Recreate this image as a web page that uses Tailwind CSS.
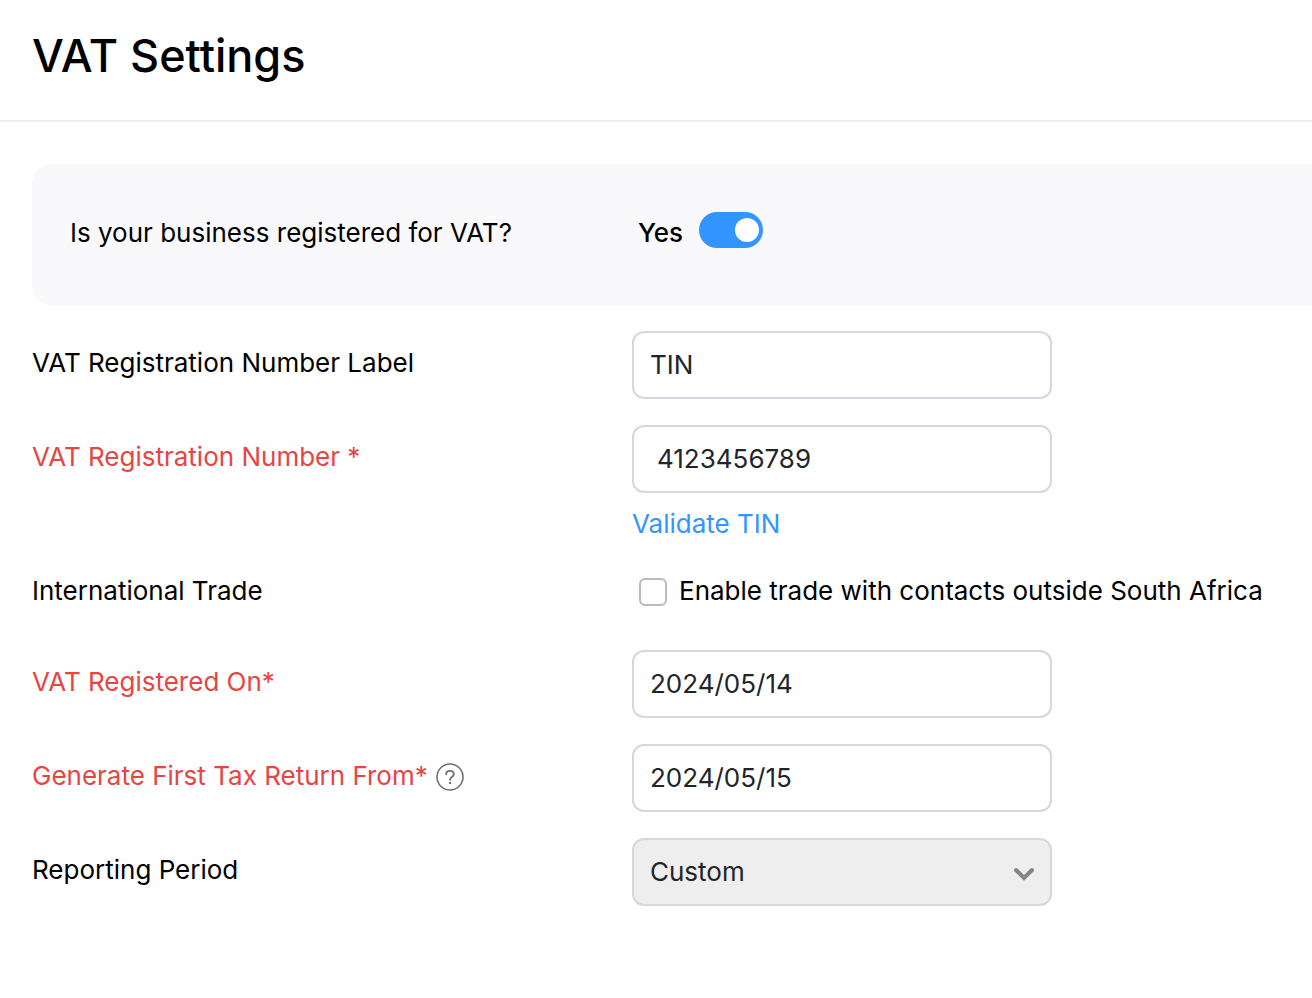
<!DOCTYPE html>
<html lang="en">
<head>
  <meta charset="UTF-8">
  <meta name="viewport" content="width=device-width, initial-scale=1.0">
  <title>VAT Settings</title>
  <script src="https://cdn.jsdelivr.net/npm/@tailwindcss/browser@4"></script>
</head>
<body class="bg-white min-h-screen overflow-x-hidden font-['Inter',sans-serif] text-[26px] leading-8 text-black">
  <header class="border-b-2 border-[#ededed] px-8 pt-7 pb-9">
    <h1 class="text-[45px] leading-14 font-medium">VAT Settings</h1>
  </header>

  <main class="pl-8 pt-[42px]">
    <!-- Registered toggle -->
    <section class="flex items-start rounded-l-[20px] bg-[#f9f9fb] pl-[38px] pt-12 pb-14">
      <label for="registered" class="w-[568px] shrink-0 pt-[5px]">Is your business registered for VAT?</label>
      <span class="pt-[5px] font-medium">Yes</span>
      <input id="registered" type="checkbox" role="switch" checked
        class="ml-4 flex h-9 w-16 appearance-none items-center rounded-full bg-gray-300 px-1 before:size-6 before:rounded-full before:bg-white checked:justify-end checked:bg-[#3395ff]">
    </section>

    <form class="pt-[26px] space-y-[26px]">
      <div class="flex items-start">
        <label for="tin-label" class="w-[600px] shrink-0 pt-4">VAT Registration Number Label</label>
        <input id="tin-label" type="text" value="TIN" class="h-[68px] w-[420px] rounded-xl border-2 border-[#d7d5e2] px-4 pb-0.5 text-[#212529]">
      </div>

      <div class="flex items-start">
        <label for="tin" class="w-[600px] shrink-0 pt-4 text-[#e54643]">VAT Registration Number *</label>
        <div>
          <input id="tin" type="text" value="4123456789" class="block h-[68px] w-[420px] rounded-xl border-2 border-[#d7d5e2] px-[23px] pb-0.5 text-[#212529]">
          <a href="#" class="mt-[15px] block text-[#3395ff]">Validate TIN</a>
        </div>
      </div>

      <div class="flex items-start pt-[9px]">
        <span class="w-[600px] shrink-0">International Trade</span>
        <label class="flex items-start gap-3 pl-[7px] whitespace-nowrap">
          <input type="checkbox" class="mt-[3px] size-7 appearance-none rounded-md border-2 border-[#bbbbbb] bg-white checked:bg-[#3395ff]">
          Enable trade with contacts outside South Africa
        </label>
      </div>

      <div class="flex items-start pt-[17px]">
        <label for="registered-on" class="w-[600px] shrink-0 pt-4 text-[#e54643]">VAT Registered On*</label>
        <input id="registered-on" type="text" value="2024/05/14" class="h-[68px] w-[420px] rounded-xl border-2 border-[#d7d5e2] px-4 pb-0.5 text-[#212529]">
      </div>

      <div class="flex items-start">
        <div class="flex w-[600px] shrink-0 items-start gap-2 pt-4">
          <label for="return-from" class="text-[#e54643]">Generate First Tax Return From*</label>
          <button type="button" aria-label="Help" class="pt-[3px]">
            <svg class="size-7" viewBox="0 0 28 28" fill="none" stroke="#717178" stroke-width="1.6" stroke-linecap="round" stroke-linejoin="round">
              <circle cx="14" cy="14" r="13"/>
              <path d="M10.200 11.300C10.200 9.200 11.900 7.900 14 7.900s3.800 1.300 3.800 3.300c0 2.800-3.700 2.800-3.700 5.600" stroke-width="1.9"/>
              <circle cx="14.100" cy="20" r="1.200" fill="#717178" stroke="none"/>
            </svg>
          </button>
        </div>
        <input id="return-from" type="text" value="2024/05/15" class="h-[68px] w-[420px] rounded-xl border-2 border-[#d7d5e2] px-4 pb-0.5 text-[#212529]">
      </div>

      <div class="flex items-start">
        <label for="period" class="w-[600px] shrink-0 pt-4">Reporting Period</label>
        <div class="relative">
          <select id="period" class="block h-[68px] w-[420px] appearance-none rounded-xl border-2 border-[#d7d5e2] bg-[#eeeeee] px-4 text-[#212529]">
            <option>Custom</option>
          </select>
          <svg class="pointer-events-none absolute right-4 top-7 h-4 w-6" viewBox="0 0 24 16" fill="none" stroke="#858585" stroke-width="4" stroke-linecap="round">
            <path d="M4 4l8 8 8-8"/>
          </svg>
        </div>
      </div>
    </form>
  </main>
</body>
</html>
